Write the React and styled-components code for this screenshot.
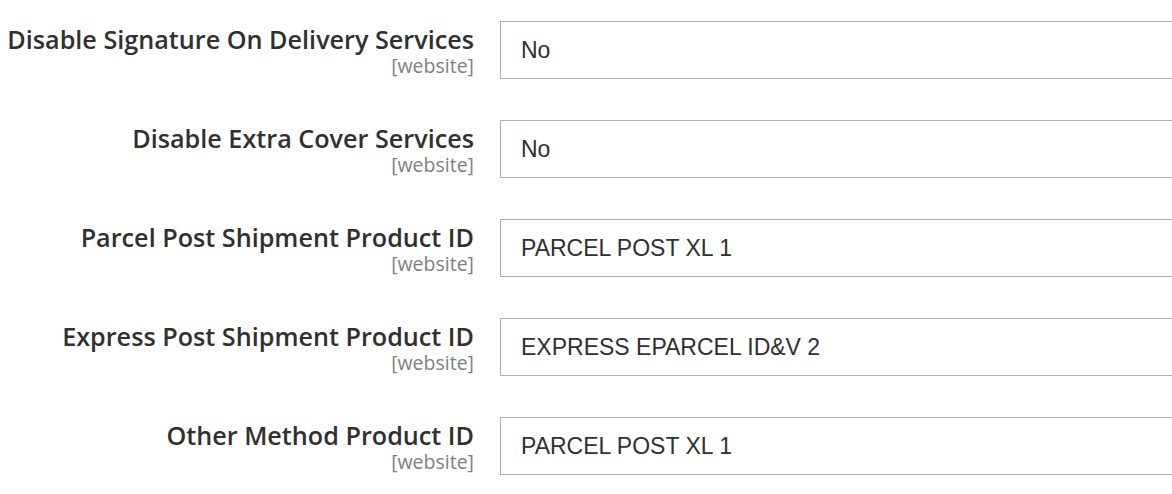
import React from "react";
import styled, { createGlobalStyle } from "styled-components";

const Global = createGlobalStyle`
  html, body { margin: 0; padding: 0; background: #fff; }
  body { overflow: hidden; }
`;

const Form = styled.div`
  display: flex;
  flex-direction: column;
  gap: 41px;
  padding-top: 21px;
  width: 1200px;
`;

const Row = styled.div`
  display: grid;
  grid-template-columns: 474px 1fr;
  column-gap: 26px;
  align-items: start;
`;

const LabelCell = styled.div`
  display: flex;
  flex-direction: column;
  align-items: flex-end;
  text-align: right;
  padding-top: 1px;
  font-family: "Open Sans", sans-serif;
`;

const LabelText = styled.span`
  font-size: 25.2px;
  font-weight: 600;
  color: #303030;
  line-height: 34px;
  white-space: nowrap;
`;

const Scope = styled.span`
  font-size: 19.5px;
  color: #808080;
  line-height: 19px;
`;

const Field = styled.div`
  height: 58px;
  box-sizing: border-box;
  border: 1.5px solid #adadad;
  display: flex;
  align-items: center;
  padding-left: 20px;
  font-family: "Liberation Sans", Arial, sans-serif;
  font-size: 23px;
  color: #303030;
`;

const rows = [
  ["Disable Signature On Delivery Services", "No"],
  ["Disable Extra Cover Services", "No"],
  ["Parcel Post Shipment Product ID", "PARCEL POST XL 1"],
  ["Express Post Shipment Product ID", "EXPRESS EPARCEL ID&V 2"],
  ["Other Method Product ID", "PARCEL POST XL 1"],
];

export default function App() {
  return (
    <>
      <Global />
      <Form>
        {rows.map(([label, value]) => (
          <Row key={label}>
            <LabelCell>
              <LabelText>{label}</LabelText>
              <Scope>[website]</Scope>
            </LabelCell>
            <Field>{value}</Field>
          </Row>
        ))}
      </Form>
    </>
  );
}
